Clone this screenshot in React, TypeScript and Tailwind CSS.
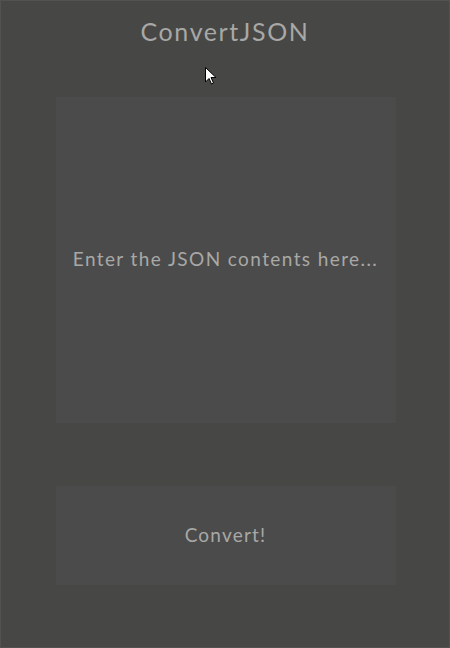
import React, { useState } from 'react';

export default function App() {
    const [json, setJson] = useState('');

    return (
        <div className="relative min-h-[648px] w-full bg-[#474745] shadow-[inset_0_0_0_1px_#525250] flex flex-col items-center font-['Lato','Noto_Sans',sans-serif] text-[#a8a8a6]">
            {/* Title */}
            <h1 className="pt-[15px] text-[25px] leading-[32px] tracking-[1.6px]">ConvertJSON</h1>

            {/* Input */}
            <textarea
                value={json}
                onChange={(e) => setJson(e.target.value)}
                placeholder="Enter the JSON contents here..."
                className="block mt-[50px] ml-px w-[340px] h-[326px] bg-[#4b4b4b] resize-none outline-none text-center text-[19px] tracking-[1.4px] text-[#a8a8a6] placeholder:text-[#a8a8a6] pt-[148px] px-1"
            />

            {/* Action */}
            <button className="block mt-[63px] ml-px w-[340px] h-[99px] bg-[#4b4b4b] text-[19px] tracking-[1.2px] text-[#a8a8a6]">
                Convert!
            </button>

            {/* Mouse pointer */}
            <svg className="absolute left-[205px] top-[67px] w-[12px] h-[18px]" viewBox="0 0 12 18">
                <path d="M0.5 0.5 L0.5 15 L4 11.5 L6.5 17 L8.5 16 L6 10.5 L11 10.5 Z" fill="#fff" stroke="#000" strokeWidth="1" />
            </svg>
        </div>
    );
}
